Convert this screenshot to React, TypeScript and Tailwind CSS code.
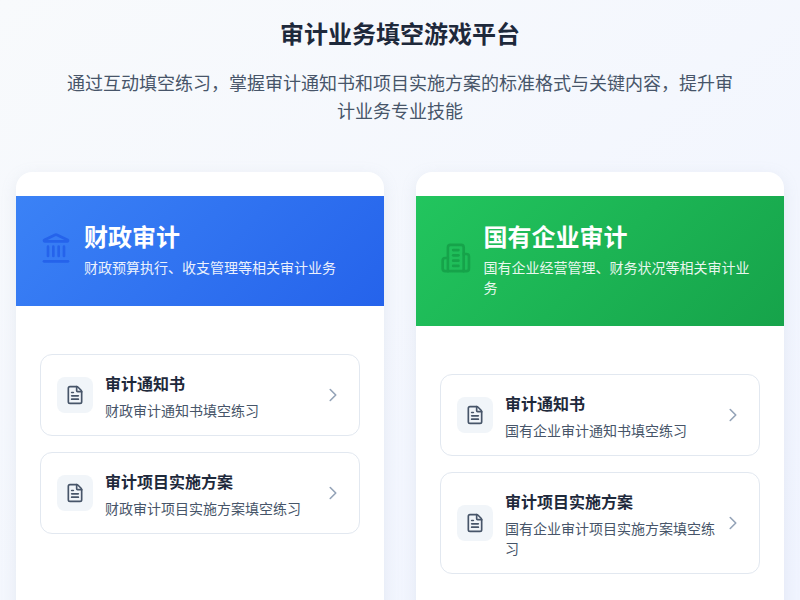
import { ChevronRight, FileText, Landmark } from "lucide-react"

const sections = [
  {
    title: "财政审计",
    desc: "财政预算执行、收支管理等相关审计业务",
    header: "bg-[linear-gradient(135deg,#3b82f6,#2563eb)]",
    iconColor: "text-[#2563eb]",
    icon: "bank",
    items: [
      { name: "审计通知书", sub: "财政审计通知书填空练习" },
      { name: "审计项目实施方案", sub: "财政审计项目实施方案填空练习" },
    ],
  },
  {
    title: "国有企业审计",
    desc: "国有企业经营管理、财务状况等相关审计业务",
    header: "bg-[linear-gradient(135deg,#22c55e,#16a34a)]",
    iconColor: "text-[#16a34a]",
    icon: "building",
    items: [
      { name: "审计通知书", sub: "国有企业审计通知书填空练习" },
      { name: "审计项目实施方案", sub: "国有企业审计项目实施方案填空练习" },
    ],
  },
]

function BuildingIcon({ className }: { className?: string }) {
  return (
    <svg viewBox="0 0 24 24" fill="none" stroke="currentColor" strokeWidth="2" strokeLinecap="round" strokeLinejoin="round" className={className}>
      <path d="M6 22V4a2 2 0 0 1 2-2h8a2 2 0 0 1 2 2v18Z" />
      <path d="M6 12H4a2 2 0 0 0-2 2v6a2 2 0 0 0 2 2h2" />
      <path d="M18 9h2a2 2 0 0 1 2 2v9a2 2 0 0 1-2 2h-2" />
      <path d="M10 6h4" />
      <path d="M10 10h4" />
      <path d="M10 14h4" />
      <path d="M10 18h4" />
    </svg>
  )
}

export default function App() {
  return (
    <div className="h-[600px] overflow-hidden bg-gradient-to-br from-[#f8fafc] to-[#f0f4ff] font-['Inter','Noto_Sans_CJK_SC',sans-serif]">
      <div className="px-4 pt-4">
        <div className="mb-[46px] text-center">
          <h1 className="text-2xl font-semibold leading-[38px] text-[#1e293b]">审计业务填空游戏平台</h1>
          <p className="mx-auto mt-4 w-[672px] text-lg leading-7 text-[#475569]">
            通过互动填空练习，掌握审计通知书和项目实施方案的标准格式与关键内容，提升审计业务专业技能
          </p>
        </div>

        <div className="grid grid-cols-2 gap-8">
          {sections.map((section) => (
            <div key={section.title} className="h-[500px] rounded-2xl bg-white py-6 shadow-[0_4px_16px_rgba(148,163,184,0.15)]">
              <div className={`flex items-center gap-3 px-6 pb-7 pt-6 text-white ${section.header}`}>
                {section.icon === "bank" ? (
                  <Landmark className={`-mt-0.5 h-8 w-8 ${section.iconColor}`} />
                ) : (
                  <BuildingIcon className={`-mt-0.5 h-8 w-8 ${section.iconColor}`} />
                )}
                <div>
                  <h2 className="text-2xl font-bold leading-[36px]">{section.title}</h2>
                  <p className="mt-0.5 text-sm leading-5 opacity-90">{section.desc}</p>
                </div>
              </div>

              <div className="mt-6 space-y-4 p-6">
                {section.items.map((item) => (
                  <div key={item.name} className="flex items-center rounded-xl border border-[#e2e8f0] bg-white p-4">
                    <div className="mr-3 flex h-9 w-9 flex-shrink-0 items-center justify-center rounded-lg bg-[#f1f5f9] text-[#475569]">
                      <FileText className="h-5 w-5" />
                    </div>
                    <div className="-mb-0.5 min-w-0 flex-1">
                      <h3 className="text-base font-semibold leading-[26px] text-[#1e293b]">{item.name}</h3>
                      <p className="mt-1 text-sm leading-5 text-[#475569]">{item.sub}</p>
                    </div>
                    <ChevronRight className="-mr-px h-[22px] w-[22px] flex-shrink-0 text-[#94a3b8]" strokeWidth={1.75} />
                  </div>
                ))}
              </div>
            </div>
          ))}
        </div>
      </div>
    </div>
  )
}
